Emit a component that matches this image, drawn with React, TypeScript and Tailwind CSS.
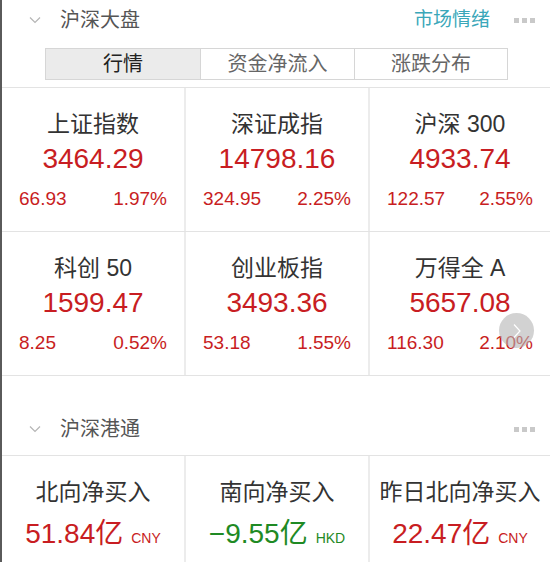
const FONT = { fontFamily: '"Liberation Sans", "Noto Sans CJK SC", sans-serif' };

interface IndexCell {
  name: string;
  value: string;
  change: string;
  pct: string;
}

const rows: IndexCell[][] = [
  [
    { name: '上证指数', value: '3464.29', change: '66.93', pct: '1.97%' },
    { name: '深证成指', value: '14798.16', change: '324.95', pct: '2.25%' },
    { name: '沪深 300', value: '4933.74', change: '122.57', pct: '2.55%' },
  ],
  [
    { name: '科创 50', value: '1599.47', change: '8.25', pct: '0.52%' },
    { name: '创业板指', value: '3493.36', change: '53.18', pct: '1.55%' },
    { name: '万得全 A', value: '5657.08', change: '116.30', pct: '2.10%' },
  ],
];

const flows = [
  { name: '北向净买入', value: '51.84亿', unit: 'CNY', up: true },
  { name: '南向净买入', value: '−9.55亿', unit: 'HKD', up: false },
  { name: '昨日北向净买入', value: '22.47亿', unit: 'CNY', up: true },
];

function Chevron() {
  return (
    <svg width="12" height="8" viewBox="0 0 12 8" className="shrink-0">
      <path d="M1 1.5 L6 6.5 L11 1.5" fill="none" stroke="#b5b5b5" strokeWidth="1.2" />
    </svg>
  );
}

function Dots() {
  return (
    <div className="flex gap-[3px]">
      <span className="w-[5px] h-[5px] bg-[#c9c9c9]" />
      <span className="w-[5px] h-[5px] bg-[#c9c9c9]" />
      <span className="w-[5px] h-[5px] bg-[#c9c9c9]" />
    </div>
  );
}

function SectionHeader({ title, extra }: { title: string; extra?: string }) {
  return (
    <div className="flex items-center h-[40px] pl-[27px] pr-[15px]">
      <Chevron />
      <span className="ml-[19px] text-[20px] text-[#555]">{title}</span>
      <div className="flex-1" />
      {extra && <span className="text-[19px] text-[#3aa7b9] mr-[24px]">{extra}</span>}
      <Dots />
    </div>
  );
}

export default function App() {
  return (
    <div className="w-[550px] h-[562px] overflow-hidden bg-white border-l-2 border-[#5a5a5a]" style={FONT}>
      <SectionHeader title="沪深大盘" extra="市场情绪" />

      <div className="flex h-[32px] mt-[8px] ml-[43px] w-[463px] border border-[#d6d6d6] text-[20px]">
        <div className="w-[154px] flex items-center justify-center bg-[#ebebeb] text-[#222]">行情</div>
        <div className="w-[154px] flex items-center justify-center border-l border-[#d6d6d6] text-[#666]">资金净流入</div>
        <div className="flex-1 flex items-center justify-center border-l border-[#d6d6d6] text-[#666]">涨跌分布</div>
      </div>

      <div className="mt-[7px] border-t border-[#e3e3e3]">
        {rows.map((row, ri) => (
          <div key={ri} className="grid grid-cols-[182px_184px_1fr] h-[144px] border-b border-[#e3e3e3]">
            {row.map((c, ci) => (
              <div
                key={ci}
                className={`relative flex flex-col items-center pt-[21px] ${ci > 0 ? 'border-l-2 border-[#ececec]' : ''}`}
              >
                <div className="text-[23px] leading-[30px] text-[#333] whitespace-pre">{c.name}</div>
                <div className="mt-[3px] text-[28px] leading-[34px] text-[#c81d22]">{c.value}</div>
                <div className="mt-[11px] w-full flex justify-between px-[17px] text-[19px] leading-[24px] text-[#c81d22]">
                  <span>{c.change}</span>
                  <span>{c.pct}</span>
                </div>
                {ri === 1 && ci === 2 && (
                  <div className="absolute left-[129px] top-[81px] w-[35px] h-[35px] rounded-full bg-[#b4b4b4]/60 flex items-center justify-center">
                    <svg width="10" height="16" viewBox="0 0 10 16">
                      <path d="M2 1.5 L8 8 L2 14.5" fill="none" stroke="#ffffff" strokeWidth="1.2" />
                    </svg>
                  </div>
                )}
              </div>
            ))}
          </div>
        ))}
      </div>

      <div className="h-[33px]" />
      <SectionHeader title="沪深港通" />

      <div className="mt-[6px] grid grid-cols-[182px_184px_1fr] h-[110px] border-t border-[#e3e3e3]">
        {flows.map((f, i) => (
          <div
            key={i}
            className={`flex flex-col items-center pt-[21px] ${i > 0 ? 'border-l-2 border-[#ececec]' : ''}`}
          >
            <div className="text-[23px] leading-[30px] text-[#333] whitespace-nowrap">{f.name}</div>
            <div className="mt-[10px] flex items-baseline whitespace-nowrap">
              <span className={`text-[28px] leading-[34px] ${f.up ? 'text-[#c81d22]' : 'text-[#1f8a24]'}`}>{f.value}</span>
              <span className={`ml-[8px] text-[14px] ${f.up ? 'text-[#c81d22]' : 'text-[#1f8a24]'}`}>{f.unit}</span>
            </div>
          </div>
        ))}
      </div>
    </div>
  );
}
